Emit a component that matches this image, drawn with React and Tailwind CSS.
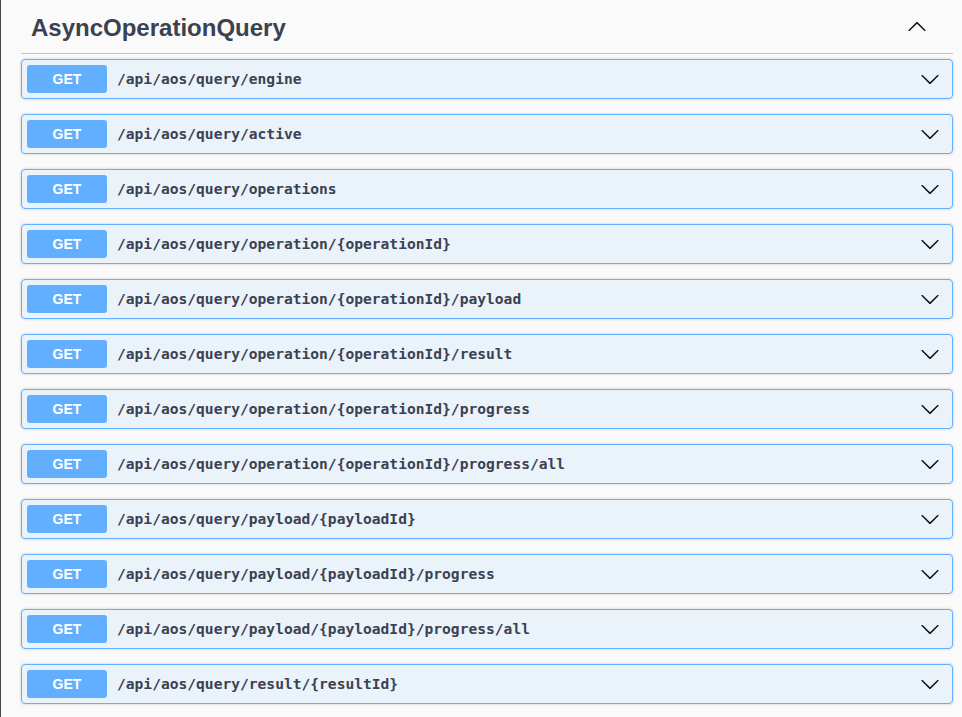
import React from 'react';

const paths = [
    '/api/aos/query/engine',
    '/api/aos/query/active',
    '/api/aos/query/operations',
    '/api/aos/query/operation/{operationId}',
    '/api/aos/query/operation/{operationId}/payload',
    '/api/aos/query/operation/{operationId}/result',
    '/api/aos/query/operation/{operationId}/progress',
    '/api/aos/query/operation/{operationId}/progress/all',
    '/api/aos/query/payload/{payloadId}',
    '/api/aos/query/payload/{payloadId}/progress',
    '/api/aos/query/payload/{payloadId}/progress/all',
    '/api/aos/query/result/{resultId}',
];

const Arrow = ({ up }) => (
    <svg width="20" height="20" viewBox="0 0 20 20" className={up ? 'rotate-180' : ''}>
        <path
            fill="#111"
            d="M17.418 6.109c.272-.268.709-.268.979 0s.271.701 0 .969l-7.908 7.83c-.27.268-.707.268-.979 0l-7.908-7.83c-.27-.268-.27-.701 0-.969.271-.268.709-.268.979 0L10 13.25l7.418-7.141z"
        />
    </svg>
);

const OpRow = ({ path }) => (
    <div className="mb-[15px] h-[40px] flex items-center pl-[5px] pr-[12px] rounded-[4px] border border-[#61affe] bg-[rgba(97,175,254,0.1)] shadow-[0_0_3px_rgba(0,0,0,0.19)]">
        <div className="w-[80px] h-[28px] rounded-[3px] bg-[#61affe] flex items-center justify-center text-white text-[14px] font-bold font-['Liberation_Sans',Arial,sans-serif]">
            GET
        </div>
        <div className="flex-1 pl-[10px] text-[14.6px] font-bold text-[#3b4151] font-['DejaVu_Sans_Mono',monospace]">
            {path}
        </div>
        <Arrow />
    </div>
);

export default function App() {
    return (
        <div className="min-h-screen bg-[#fafafa] border-l border-[#474747] pl-[20px] pr-[9px] font-['Liberation_Sans',Arial,sans-serif]">
            <div className="h-[54px] flex items-center justify-between border-b border-[#c4c6ca] pl-[10px] pr-[26px]">
                <h3 className="text-[24px] font-bold text-[#3b4151] leading-none pt-[2px]">AsyncOperationQuery</h3>
                <Arrow up />
            </div>
            <div className="pt-[5px]">
                {paths.map((p) => (
                    <OpRow key={p} path={p} />
                ))}
            </div>
        </div>
    );
}
